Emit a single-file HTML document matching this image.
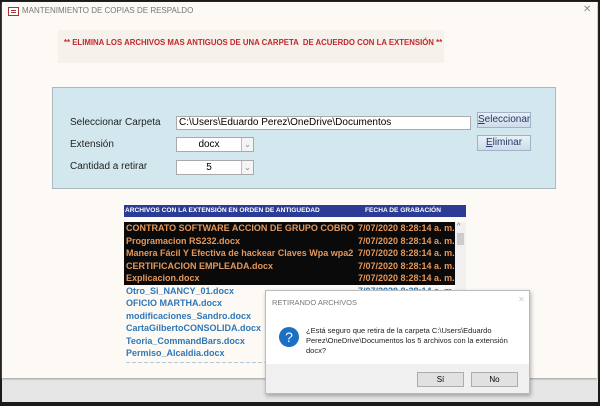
<!DOCTYPE html>
<html><head><meta charset="utf-8"><style>
*{margin:0;padding:0;box-sizing:border-box}
body{width:600px;height:406px;overflow:hidden;background:#1a1a1a;font-family:"Liberation Sans",sans-serif;position:relative}
.abs{position:absolute}
#frame{left:2px;top:2px;width:596px;height:400px;background:#e6e6e6}
#win{left:2px;top:2px;width:595px;height:376px;background:#fdf9f5;box-shadow:0 1px 2px #999}
.t{position:absolute;white-space:nowrap}
.lbl{font-size:10px;color:#222}
.btn{position:absolute;background:linear-gradient(#e9f0f8,#cfdceb);border:1px solid #9fb2c8;font-size:10px;color:#1f3a66;text-align:center;line-height:14px}
.dd{position:absolute;background:#fff;border:1px solid #aaa;font-size:10px;text-align:center;line-height:13px}
.dd i{position:absolute;right:0;top:0;width:12px;height:13px;border-left:1px solid #bbb;background:#f4f4f4;font-style:normal;font-size:8px;color:#888;line-height:13px}
.row{position:absolute;left:0;height:12.5px;font-size:9px;font-weight:bold;line-height:12.5px;white-space:nowrap}
</style></head><body>
<div id="frame" class="abs"></div>
<div id="win" class="abs"></div>
<div class="abs" style="left:8px;top:7px;width:11px;height:9px;border:1px solid #a33;background:#fff"><div style="position:absolute;left:2px;top:2px;width:5px;height:1px;background:#a33;box-shadow:0 2px 0 #a33"></div></div>
<div class="t" style="left:22px;top:6px;font-size:8px;color:#777">MANTENIMIENTO DE COPIAS DE RESPALDO</div>
<div class="t" style="left:583px;top:4px;font-size:10px;color:#888">✕</div>
<div class="abs" style="left:58px;top:30px;width:386px;height:33px;background:#f6f1ea"></div>
<div class="t" style="left:64px;top:38px;font-size:7.8px;font-weight:bold;color:#c0282e">** ELIMINA LOS ARCHIVOS MAS ANTIGUOS DE UNA CARPETA &nbsp;DE ACUERDO CON LA EXTENSIÓN **</div>
<div class="abs" style="left:52px;top:87px;width:504px;height:102px;background:#d3e8ee;border:1px solid #a9b8bd"></div>
<div class="t lbl" style="left:70px;top:117px">Seleccionar Carpeta</div>
<div class="t lbl" style="left:70px;top:139px">Extensión</div>
<div class="t lbl" style="left:70px;top:161px">Cantidad a retirar</div>
<div class="abs" style="left:176px;top:116px;width:295px;height:14px;background:#fff;border:1px solid #aaa;font-size:10px;line-height:12px;padding-left:2px">C:\Users\Eduardo Perez\OneDrive\Documentos</div>
<div class="btn" style="left:477px;top:112px;width:54px;height:16px"><u>S</u>eleccionar</div>
<div class="btn" style="left:477px;top:135px;width:54px;height:16px"><u>E</u>liminar</div>
<div class="dd" style="left:176px;top:137px;width:78px;height:15px;padding-right:12px">docx<i>⌄</i></div>
<div class="dd" style="left:176px;top:160px;width:78px;height:15px;padding-right:12px">5<i>⌄</i></div>
<div class="abs" style="left:124px;top:205px;width:342px;height:12px;background:#2c3b96;color:#fff;font-size:6.6px;font-weight:bold;line-height:12px">
<span class="t" style="left:1px">ARCHIVOS CON LA EXTENSIÓN EN ORDEN DE ANTIGUEDAD</span><span class="t" style="left:241px">FECHA DE GRABACIÓN</span></div>
<div class="abs" style="left:124px;top:222px;width:331px;height:63px;background:#0a0a0a"></div>
<div class="abs" style="left:455px;top:222px;width:11px;height:120px;background:#f0f0f0"><div style="position:absolute;left:2px;top:11px;width:7px;height:12px;background:#ccc"></div><div style="position:absolute;left:2px;top:1px;font-size:7px;color:#666">^</div></div>
<div class="abs" style="left:126px;top:222px;width:329px;height:140px;overflow:hidden;color:#e5975a">
<div class="row" style="top:0"><span style="display:inline-block;width:229px;overflow:hidden">CONTRATO SOFTWARE ACCION DE GRUPO COBRO INDEBIDO</span></div>
<div class="row" style="top:12.5px">Programacion RS232.docx</div>
<div class="row" style="top:25px">Manera Fácil Y Efectiva de hackear Claves Wpa wpa2</div>
<div class="row" style="top:37.5px">CERTIFICACION EMPLEADA.docx</div>
<div class="row" style="top:50px">Explicacion.docx</div>
<div class="row" style="top:0;left:232px">7/07/2020 8:28:14 a. m.</div>
<div class="row" style="top:12.5px;left:232px">7/07/2020 8:28:14 a. m.</div>
<div class="row" style="top:25px;left:232px">7/07/2020 8:28:14 a. m.</div>
<div class="row" style="top:37.5px;left:232px">7/07/2020 8:28:14 a. m.</div>
<div class="row" style="top:50px;left:232px">7/07/2020 8:28:14 a. m.</div>
<div style="color:#2f78b8">
<div class="row" style="top:62.5px">Otro_Si_NANCY_01.docx</div>
<div class="row" style="top:75px">OFICIO MARTHA.docx</div>
<div class="row" style="top:87.5px">modificaciones_Sandro.docx</div>
<div class="row" style="top:100px">CartaGilbertoCONSOLIDA.docx</div>
<div class="row" style="top:112.5px">Teoria_CommandBars.docx</div>
<div class="row" style="top:125px">Permiso_Alcaldia.docx</div>
<div class="row" style="top:62.5px;left:232px;color:#2f78b8">7/07/2020 8:28:14 a. m.</div>
</div></div>
<div class="abs" style="left:126px;top:362px;width:140px;height:1px;background:repeating-linear-gradient(90deg,#b5c8d8 0 4px,transparent 4px 6px)"></div>
<div class="abs" style="left:265px;top:290px;width:265px;height:104px;background:#fff;border:1px solid #bbb;box-shadow:1px 2px 4px rgba(0,0,0,.3)">
<div class="t" style="left:6px;top:7px;font-size:7.5px;color:#777">RETIRANDO ARCHIVOS</div>
<div class="t" style="left:252px;top:4px;font-size:8px;color:#ccc">✕</div>
<div class="abs" style="left:13px;top:36px;width:20px;height:20px;border-radius:50%;background:#1c6fc4;color:#fff;font-size:14px;text-align:center;line-height:20px">?</div>
<div class="t" style="left:40px;top:35px;font-size:7.5px;line-height:10px;color:#222">¿Está seguro que retira de la carpeta C:\Users\Eduardo<br>Perez\OneDrive\Documentos los 5 archivos con la extensión<br>docx?</div>
<div class="abs" style="left:0;top:73px;width:263px;height:29px;background:#f0f0f0"></div>
<div class="abs" style="left:151px;top:81px;width:47px;height:15px;background:#e1e1e1;border:1px solid #adadad;font-size:8px;text-align:center;line-height:13px">Sí</div>
<div class="abs" style="left:205px;top:81px;width:47px;height:15px;background:#e1e1e1;border:1px solid #adadad;font-size:8px;text-align:center;line-height:13px">No</div>
</div>
</body></html>
